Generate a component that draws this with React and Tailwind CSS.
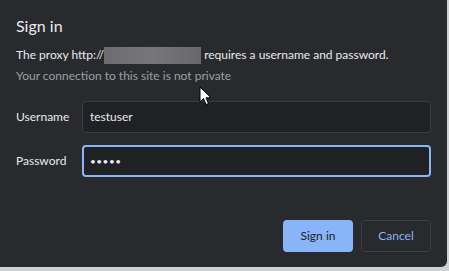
import React from "react";

function Cursor() {
  return (
    <svg
      className="absolute left-[199px] top-[86px]"
      width="14"
      height="20"
      viewBox="0 0 14 20"
    >
      <path
        d="M1 1 L1 16 L4.5 12.5 L7 18.5 L9.5 17.5 L7 11.8 L12 11.8 Z"
        fill="#ffffff"
        stroke="#000000"
        strokeWidth="1"
        strokeLinejoin="round"
      />
    </svg>
  );
}

export default function App() {
  return (
    <div className="relative w-[449px] h-[271px] bg-[#cfd0d2] font-['Lato',sans-serif]">
      <div className="flex flex-col w-[447px] h-[267px] bg-[#292a2d] rounded-br-[6px] px-4">
        <h1 className="mt-[15px] text-[16px] leading-[22px] text-[#e8eaed]">Sign in</h1>

        <p className="mt-[9px] flex items-center whitespace-nowrap text-[12px] leading-[18px] text-[#e8eaed]">
          <span>The proxy http://</span>
          <span className="inline-block w-[97px] h-[17px] bg-gradient-to-r from-[#6c6c70] via-[#77777b] to-[#68686c] blur-[0.5px]" />
          <span className="ml-[3px]">requires a username and password.</span>
        </p>
        <p className="mt-[3px] whitespace-nowrap text-[12px] leading-[18px] text-[#9aa0a6]">
          Your connection to this site is not private
        </p>

        <div className="mt-[16px] flex flex-col gap-[12px]">
          <div className="flex items-center">
            <span className="w-[66px] text-[12px] text-[#e8eaed]">Username</span>
            <div className="flex items-center w-[349px] h-[32px] rounded-[4px] border border-[#3c3d41] bg-[#202124] px-[7px] text-[12px] text-[#e8eaed]">
              testuser
            </div>
          </div>
          <div className="flex items-center">
            <span className="w-[66px] text-[12px] text-[#e8eaed]">Password</span>
            <div className="flex items-center w-[349px] h-[32px] rounded-[4px] border-2 border-[#8ab4f8] bg-[#202124] px-[6px] text-[10px] tracking-[0.5px] text-[#e8eaed]">
              •••••
            </div>
          </div>
        </div>

        <div className="mt-auto mb-[15px] flex justify-end gap-[8px]">
          <button className="w-[70px] h-[32px] rounded-[4px] bg-[#8ab4f8] text-[12px] text-[#202124]">
            Sign in
          </button>
          <button className="w-[70px] h-[32px] rounded-[4px] border border-[#3c4043] text-[12px] text-[#8ab4f8]">
            Cancel
          </button>
        </div>
      </div>
      <Cursor />
    </div>
  );
}
